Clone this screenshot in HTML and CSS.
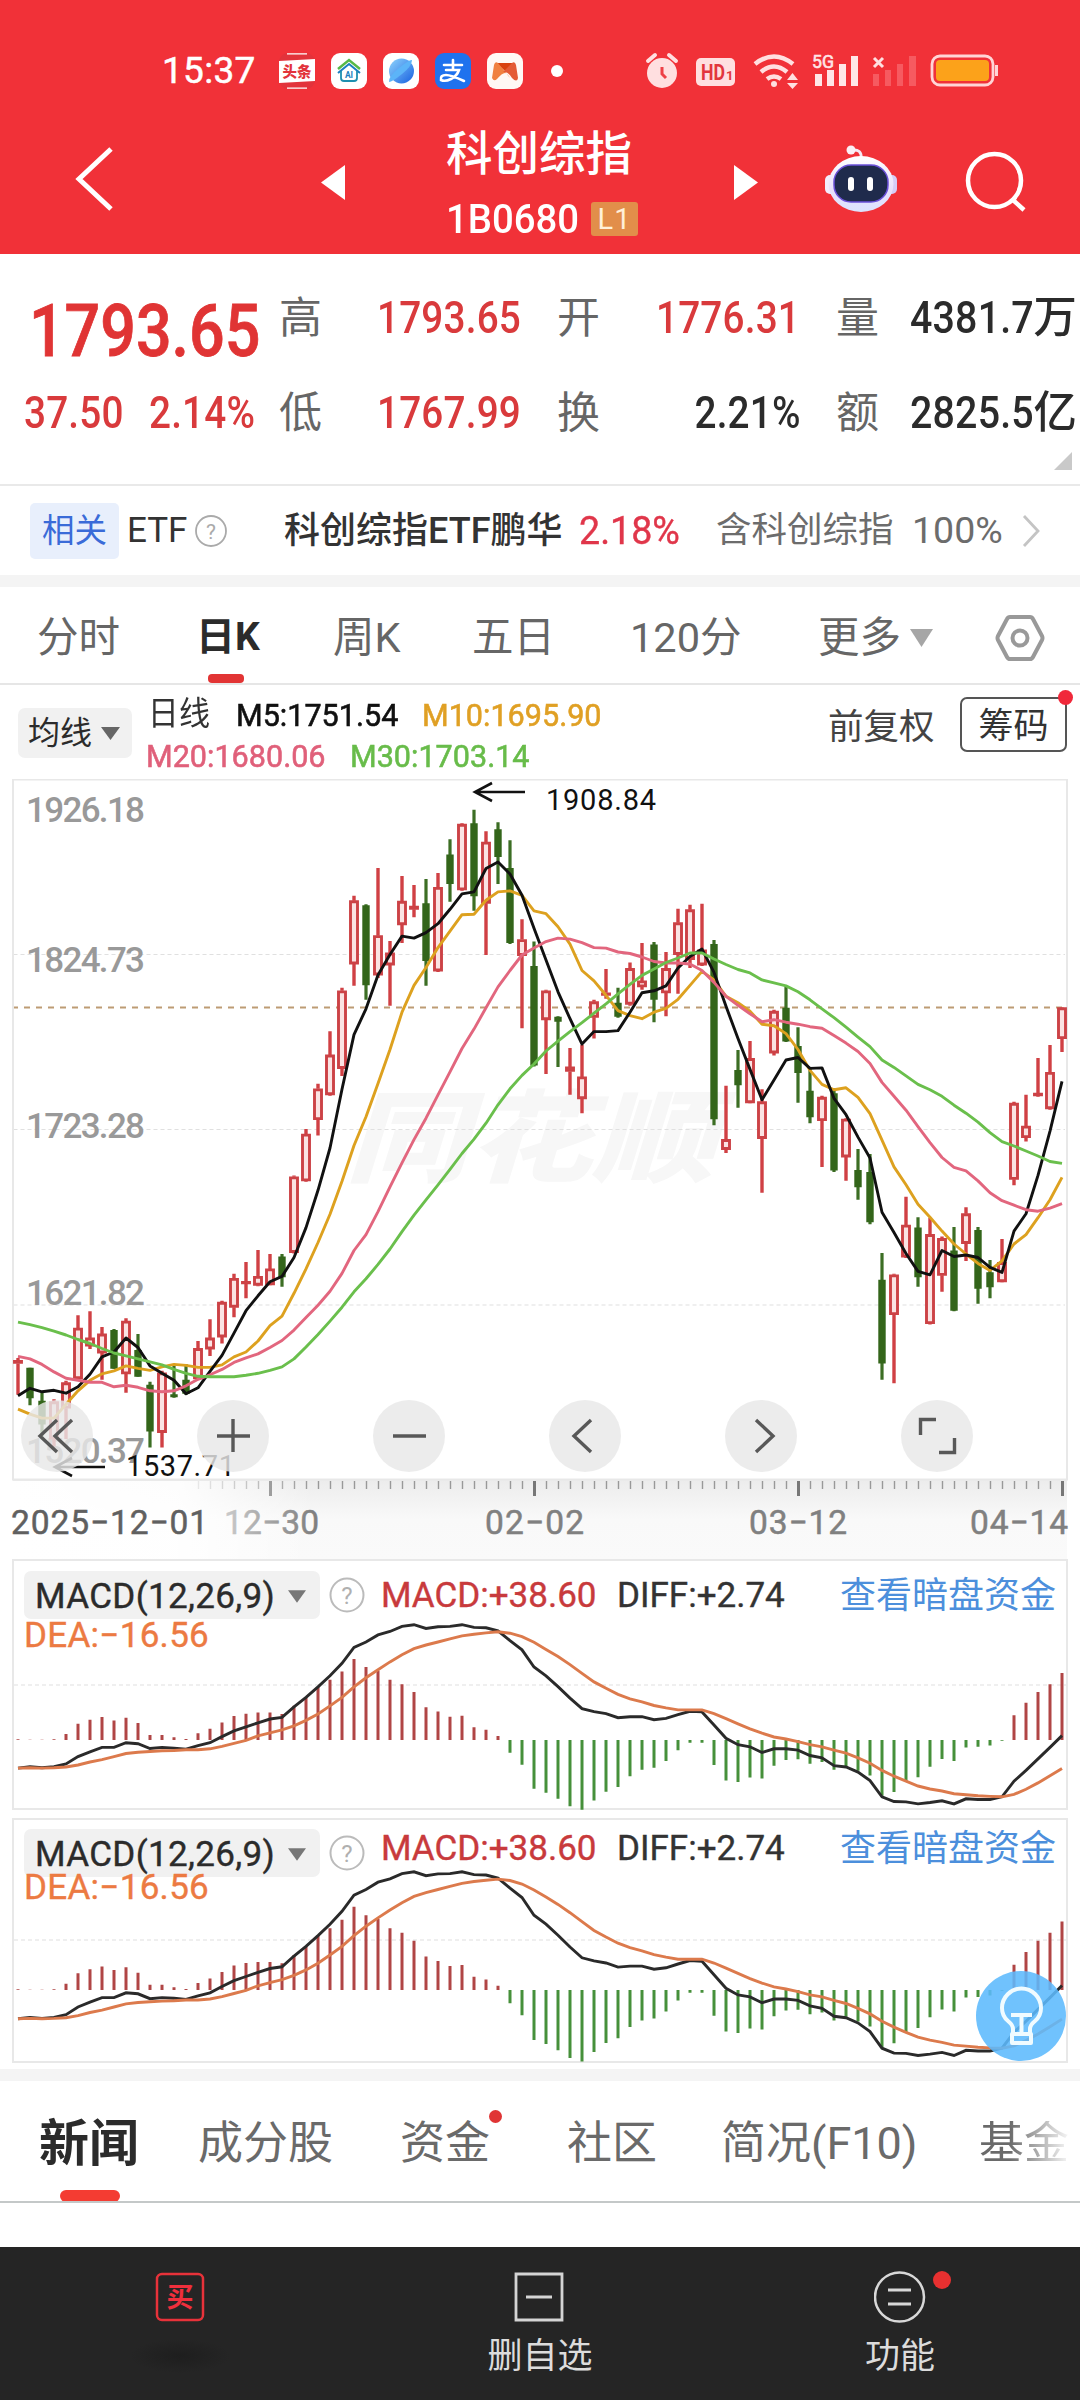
FILE: index.html
```html
<!DOCTYPE html>
<html lang="zh-CN">
<head>
<meta charset="utf-8">
<title>科创综指 1B0680</title>
<link rel="stylesheet" href="styles.css">
</head>
<body>
<header class="top">
  <div class="status">
    <span class="clock">15:37</span>
    <div class="apps">
      <svg width="36" height="36" viewBox="0 0 36 36"><rect width="36" height="36" rx="9" fill="#e2333b"/><path d="M8 .8h20M8 35.2h20" stroke="#fff" stroke-width="1.2"/><path d="M0 8l36-2v22L0 30z" fill="#fff"/><text x="18" y="23.500" font-size="14.500" font-weight="900" text-anchor="middle" fill="#e2333b">头条</text></svg>
      <svg width="36" height="36" viewBox="0 0 36 36"><rect width="36" height="36" rx="9" fill="#fff"/><path d="M7 16L18 7l11 9" fill="none" stroke="#57b947" stroke-width="2.500"/><path d="M7 20L18 11l11 9" fill="none" stroke="#1c7fc0" stroke-width="2"/><path d="M10 18v7q0 3 3 3h10q3 0 3-3v-7" fill="none" stroke="#1d8fb0" stroke-width="1.800"/><text x="18" y="24.500" font-size="8.500" font-weight="700" text-anchor="middle" fill="#1c7fc0">AI</text></svg>
      <svg width="36" height="36" viewBox="0 0 36 36"><defs><linearGradient id="globe" x1="0" y1="0" x2="1" y2="1"><stop offset="0" stop-color="#8fd4fd"/><stop offset="1" stop-color="#1760e0"/></linearGradient></defs><rect width="36" height="36" rx="9" fill="#fff"/><circle cx="18.500" cy="18" r="12.500" fill="url(#globe)"/><path d="M6 29Q5 24 16 15T29 7Q29 13 19 21T6 29z" fill="#5cb4f8"/></svg>
      <svg width="36" height="36" viewBox="0 0 36 36"><rect width="36" height="36" rx="9" fill="#1f72ee"/><path d="M9 12h18M18 7v9M11 17h13q-2 6-8 9t-10 1q-1-5 5-5 5 0 18 6" fill="none" stroke="#fff" stroke-width="2.600" stroke-linecap="round"/></svg>
      <svg width="36" height="36" viewBox="0 0 36 36"><rect width="36" height="36" rx="9" fill="#fff8f5"/><path d="M9 10h18l-9 8z" fill="#d9400f"/><path d="M5 25L7 12q1-4 4-2l12 15q-3-5-5-5-3 0-8 6-3 3-5-1z" fill="#f08040"/><path d="M31 25l-2-13q-1-4-4-2l-9 9q5-1 9 6 5 5 6 0z" fill="#e45a35"/></svg>
      <i class="dot-more"></i>
    </div>
    <div class="sys">
      <svg width="50" height="60" viewBox="640 40 50 60"><circle cx="662" cy="73" r="15" fill="#ffdfe0"/><path d="M648 61l7-6M676 61l-7-6" stroke="#ffdfe0" stroke-width="4" stroke-linecap="round"/><path d="M662 67v7l4 4" fill="none" stroke="#ee4047" stroke-width="3"/></svg>
      <svg width="55" height="60" viewBox="690 40 55 60"><rect x="696" y="58" width="39" height="28" rx="5" fill="#ffdfe0"/><text x="701" y="80" font-size="22" font-weight="700" fill="#e2363d" textLength="24" lengthAdjust="spacingAndGlyphs">HD</text><text x="726" y="80" font-size="13" font-weight="700" fill="#e2363d">1</text></svg>
      <svg width="60" height="60" viewBox="745 40 60 60" fill="none" stroke="#ffdfe0" stroke-width="4.500"><path d="M755 64q19-15 38 0M761 72q13-11 26 0M767 79q7-5 14 0"/><circle cx="774" cy="84" r="3" fill="#ffdfe0" stroke="none"/><path d="M787 80l5.500-7 5.500 7zM787 83l5.500 6 5.500-6z" fill="#ffdfe0" stroke="none"/></svg>
      <svg width="60" height="60" viewBox="805 40 60 60" fill="#ffe6e7"><path d="M815 74h7v12h-7zM827 70h7v16h-7zM839 64h7v22h-7zM851 56h7v30h-7z"/><text x="812" y="68" font-size="19" textLength="22" lengthAdjust="spacingAndGlyphs" stroke="#ffe6e7" stroke-width=".6">5G</text></svg>
      <svg width="57" height="60" viewBox="865 40 57 60"><path d="M873 74h6v12h-6zM885 70h6v16h-6zM897 64h6v22h-6zM909 56h7v30h-7z" fill="#f65a60"/><path d="M874 58l9 9M883 58l-9 9" stroke="#ffdfe0" stroke-width="3"/></svg>
      <svg width="78" height="60" viewBox="922 40 78 60"><rect x="932" y="56" width="61" height="29" rx="8" fill="none" stroke="#ffd5d6" stroke-width="2.800"/><rect x="936" y="60" width="53" height="21" rx="4" fill="#fca21a"/><path d="M996.500 65v11" stroke="#ffd5d6" stroke-width="3"/></svg>
    </div>
  </div>
  <nav class="nav">
    <svg width="200" height="154" viewBox="0 100 200 154"><path d="M111 149L79 179l32 30" fill="none" stroke="#fff" stroke-width="5"/></svg>
    <svg width="200" height="154" viewBox="200 100 200 154"><path d="M345 165v35l-24-17.500z" fill="#fff"/></svg>
    <div class="title">
      <h1>科创综指</h1>
      <div class="code"><span>1B0680</span><b>L1</b></div>
    </div>
    <svg width="120" height="154" viewBox="680 100 120 154"><path d="M734 165v35l24-17.500z" fill="#fff"/></svg>
    <svg width="130" height="154" viewBox="800 100 130 154">
      <defs><linearGradient id="shell" x1="0" y1="0" x2="0" y2="1"><stop offset="0" stop-color="#fff"/><stop offset=".6" stop-color="#e9e1fb"/><stop offset="1" stop-color="#dbe3ff"/></linearGradient></defs>
      <path d="M861 158q1-9-9-8" fill="none" stroke="#f6e8f4" stroke-width="3"/><circle cx="851" cy="150" r="4.500" fill="#fbeff5"/>
      <rect x="825" y="175" width="12" height="19" rx="5" fill="#f3edfc"/><rect x="885" y="175" width="12" height="19" rx="5" fill="#d6cdf7"/>
      <ellipse cx="861" cy="184" rx="32.500" ry="28" fill="url(#shell)"/>
      <rect x="834" y="165" width="54" height="37" rx="17" fill="#1f2b4c" stroke="#6a50d8" stroke-width="1.500"/>
      <rect x="848" y="177" width="6" height="14" rx="3" fill="#fff"/><rect x="867" y="177" width="6" height="14" rx="3" fill="#fff"/>
    </svg>
    <svg width="150" height="154" viewBox="930 100 150 154"><circle cx="994.500" cy="180.500" r="26.500" fill="none" stroke="#fff" stroke-width="4.500"/><path d="M1013 200l11 10" stroke="#fff" stroke-width="4.500"/></svg>
  </nav>
</header>

<section class="quote">
  <div class="q-row first">
    <strong class="price">1793.65</strong>
    <span>高</span><b class="up">1793.65</b>
    <span>开</span><b class="up">1776.31</b>
    <span>量</span><b class="big">4381.7<em>万</em></b>
  </div>
  <div class="q-row">
    <div class="change"><b class="up">37.50</b><b class="up">2.14%</b></div>
    <span>低</span><b class="up">1767.99</b>
    <span>换</span><b class="end">2.21%</b>
    <span>额</span><b class="big">2825.5<em>亿</em></b>
  </div>
  <i class="corner"></i>
</section>

<section class="related">
  <span class="tag">相关</span><span class="etf">ETF</span>
  <svg width="34" height="34" viewBox="0 0 34 34"><circle cx="17" cy="17" r="15" fill="none" stroke="#aaa" stroke-width="1.800"/><text x="17" y="24.500" font-size="21" text-anchor="middle" fill="#aaa">?</text></svg>
  <span class="fund">科创综指ETF鹏华</span><span class="pct">2.18%</span><span class="has">含科创综指</span><span class="full">100%</span>
  <svg width="20" height="34" viewBox="0 0 20 34"><path d="M2 2l14 15L2 32" fill="none" stroke="#c4c4c4" stroke-width="2.800"/></svg>
</section>

<nav class="periods">
  <span>分时</span><span class="on">日K</span><span>周K</span><span>五日</span><span>120分</span><span>更多</span>
  <svg width="24" height="20" viewBox="0 0 24 20"><path d="M0 1h23L11.500 19z" fill="#a6a6a6"/></svg>
  <svg width="52" height="50" viewBox="0 0 52 50"><path d="M15 4h20q2 0 3 2l9 17q1 2 0 4l-9 17q-1 2-3 2H15q-2 0-3-2L3 27q-1-2 0-4l9-17q1-2 3-2z" fill="none" stroke="#999" stroke-width="4"/><circle cx="25" cy="25" r="7.500" fill="none" stroke="#999" stroke-width="4"/></svg>
</nav>

<section class="ma-bar">
  <span class="picker">均线<svg width="19" height="14" viewBox="0 0 19 14"><path d="M0 1h19L9.500 14z" fill="#666"/></svg></span>
  <div class="ma-list">
    <div><span class="name">日线</span><span class="m5">M5:1751.54</span><span class="m10">M10:1695.90</span></div>
    <div><span class="m20">M20:1680.06</span><span class="m30">M30:1703.14</span></div>
  </div>
  <span class="adjust">前复权</span>
  <span class="chips">筹码<i></i></span>
</section>

<section class="kline">
  <svg id="kline" width="1080" height="781" viewBox="0 779 1080 781">
    <defs>
      <linearGradient id="axisBg" x1="0" y1="0" x2="0" y2="1"><stop offset="0" stop-color="#ececec"/><stop offset=".5" stop-color="#f9f9f9"/><stop offset="1" stop-color="#fafafa"/></linearGradient>
      <linearGradient id="fade" x1="0" y1="0" x2="1" y2="0"><stop offset="0" stop-color="#fff"/><stop offset=".55" stop-color="#fff" stop-opacity=".9"/><stop offset="1" stop-color="#fff" stop-opacity="0"/></linearGradient>
    </defs>
    <text class="watermark" x="345" y="1174" textLength="370" lengthAdjust="spacingAndGlyphs">同花顺</text>
    <path d="M13.500 954.500H1065M13.500 1129.500H1065M13.500 1305H1065" class="grid"/>
    <path d="M12 1007.500H1066" stroke="#bd9c74" stroke-width="1.800" stroke-dasharray="6 6"/>
    <rect x="13" y="1480" width="1054" height="79" fill="url(#axisBg)"/>
    <rect x="13" y="779.500" width="1054" height="700" class="frame"/>
    <g class="ylabel">
      <text x="26" y="822" textLength="119">1926.18</text>
      <text x="26" y="972" textLength="119">1824.73</text>
      <text x="26" y="1138" textLength="119">1723.28</text>
      <text x="26" y="1304.500" textLength="119">1621.82</text>
      <text x="26" y="1462.500" textLength="119">1520.37</text>
    </g>
    <g id="candles"></g>
    <g class="mark">
      <path d="M525 792H475M492 783l-17 9 17 9"/>
      <path d="M105 1467H55M72 1458l-17 9 17 9"/>
      <text x="546" y="809.500" textLength="110">1908.84</text>
      <text x="126" y="1476" textLength="109">1537.71</text>
    </g>
    <g id="ticks"></g>
    <text class="xlabel" x="224" y="1533.500" textLength="95">12−30</text>
    <rect x="13" y="1481" width="300" height="78" fill="url(#fade)"/>
    <text class="xlabel strong" x="11" y="1533.500" textLength="197">2025−12−01</text>
    <text class="xlabel" x="485" y="1533.500" textLength="99">02−02</text>
    <text class="xlabel" x="749" y="1533.500" textLength="98">03−12</text>
    <text class="xlabel" x="970" y="1533.500" textLength="98">04−14</text>
  </svg>
  <div class="tools">
    <button><svg width="72" height="72"><path d="M36 20L19 36l17 16M51 20L34 36l17 16"/></svg></button>
    <button><svg width="72" height="72"><path d="M20 36h33M36 19v33"/></svg></button>
    <button><svg width="72" height="72"><path d="M20 36h33"/></svg></button>
    <button><svg width="72" height="72"><path d="M42 20L25 36l17 16"/></svg></button>
    <button><svg width="72" height="72"><path d="M31 20l17 16-17 16"/></svg></button>
    <button><svg width="72" height="72"><path d="M35 19.500H19.500V35M38 52.500h15.500V38"/></svg></button>
  </div>
</section>

<section class="macd">
  <svg class="plot" id="macd1" width="1080" height="251" viewBox="0 1559 1080 251"></svg>
  <div class="line">
    <span class="picker">MACD(12,26,9)<svg width="18" height="14" viewBox="0 0 19 14"><path d="M0 1h19L9.500 14z" fill="#777"/></svg></span>
    <svg class="help" width="36" height="36" viewBox="0 0 36 36"><circle cx="18" cy="18" r="16.500" fill="none" stroke="#bbb" stroke-width="2"/><text x="18" y="26.500" font-size="24" text-anchor="middle" fill="#b0b0b0">?</text></svg>
    <span class="vals"><span class="v-macd">MACD:+38.60</span><span class="v-diff">DIFF:+2.74</span><a>查看暗盘资金</a></span>
  </div>
  <span class="v-dea">DEA:−16.56</span>
</section>
<section class="macd second">
  <svg class="plot" id="macd2" width="1080" height="245" viewBox="0 1818 1080 245"></svg>
  <div class="line">
    <span class="picker">MACD(12,26,9)<svg width="18" height="14" viewBox="0 0 19 14"><path d="M0 1h19L9.500 14z" fill="#777"/></svg></span>
    <svg class="help" width="36" height="36" viewBox="0 0 36 36"><circle cx="18" cy="18" r="16.500" fill="none" stroke="#bbb" stroke-width="2"/><text x="18" y="26.500" font-size="24" text-anchor="middle" fill="#b0b0b0">?</text></svg>
    <span class="vals"><span class="v-macd">MACD:+38.60</span><span class="v-diff">DIFF:+2.74</span><a>查看暗盘资金</a></span>
  </div>
  <span class="v-dea">DEA:−16.56</span>
  <svg class="bulb" width="90" height="90" viewBox="0 0 90 90"><circle cx="45" cy="45" r="45" fill="#5cb9fd" fill-opacity=".88"/><g fill="none" stroke="#f0fbff" stroke-width="4" stroke-linejoin="round"><path d="M37 63v-5q0-4-5-8-6-5-6-13a19.500 19.500 0 0 1 39 0q0 8-6 13-5 4-5 8v5z"/><path d="M36 63h19v9H36zM35 44h21M45.500 44v18"/></g></svg>
</section>

<nav class="info-tabs">
  <span class="on">新闻</span><span>成分股</span><span>资金<i></i></span><span>社区</span><span>简况(F10)</span><span>基金</span>
</nav>
<div class="blank"></div>
<footer class="actions">
  <div><svg width="52" height="52" viewBox="0 0 52 52"><rect x="3" y="3" width="46" height="46" rx="5" fill="none" stroke="#e8323a" stroke-width="2.500"/><text x="26" y="36" font-size="27" font-weight="700" text-anchor="middle" fill="#f02f3c">买</text></svg><i class="smudge"></i></div>
  <div><svg width="52" height="52" viewBox="0 0 52 52"><path d="M2 3h46v46H2zM12 26h26" fill="none" stroke="#d4d4d4" stroke-width="2.800"/></svg><span>删自选</span></div>
  <div><svg width="52" height="52" viewBox="0 0 52 52"><circle cx="25.500" cy="26" r="24.500" fill="none" stroke="#d8d8d8" stroke-width="2.500"/><path d="M14 19h23M14 33h23" stroke="#d8d8d8" stroke-width="3"/></svg><span>功能</span><i class="badge"></i></div>
</footer>
<script src="script.js"></script>
</body>
</html>
```
FILE: styles.css
```css
* { box-sizing: border-box; }
body { margin: 0; width: 1080px; height: 2400px; overflow: hidden; background: #fff; color: #333; font-family: Roboto, "Noto Sans CJK SC", sans-serif; line-height: 1; }
svg { display: block; flex: none; }
svg text { font-family: Roboto, "Noto Sans CJK SC", sans-serif; }
i, em { font-style: normal; }
span, b, strong, a { white-space: nowrap; }

/* header */
.top { height: 254px; background: #f13138; color: #fff; }
.status { display: flex; height: 100px; padding: 40px 80px 0 162px; }
.clock { width: 117px; font-size: 37px; line-height: 62px; letter-spacing: .3px; -webkit-text-stroke: .5px; }
.apps { display: flex; align-items: center; gap: 16px; height: 62px; width: 361px; }
.dot-more { width: 12px; height: 12px; margin-left: 12px; border-radius: 50%; background: #fff; }
.sys { display: flex; }
.nav { display: grid; grid-template-columns: 200px 200px 280px 120px 130px 150px; height: 154px; }
.title { padding: 30px 0 0 46px; }
h1 { margin: 0; font-size: 46.500px; font-weight: 500; line-height: 48px; }
.code { display: flex; align-items: center; margin-top: 21px; }
.code span { width: 145px; padding-top: 1px; font-size: 41px; line-height: 38px; font-weight: 500; transform: scaleX(.935); transform-origin: left; }
.code b { width: 47px; height: 34px; background: #e28e4a; border-radius: 3px; font-size: 29px; font-weight: 400; line-height: 35px; text-align: center; letter-spacing: 1px; color: #fff0d8; }

/* quote */
.quote { position: relative; height: 232px; padding: 36px 0 0 22px; border-bottom: 2px solid #e9e9e9; }
.q-row { display: grid; grid-template-columns: 257px 98px 180px 99px 180px 74px 170px; align-items: center; height: 94px; padding-bottom: 38px; }
.q-row:not(.first) { padding-bottom: 40px; margin-top: 2px; }
.q-row > span { font-size: 43px; color: #666; }
.q-row b { font-size: 44px; font-weight: 500; color: #2b2b2b; transform: scaleX(.88); transform-origin: left; letter-spacing: .2px; }
.q-row b.big { transform: scaleX(.895); }
.q-row b em { font-size: 44px; display: inline-block; transform: scaleX(1.1); transform-origin: left; }
.q-row b.up { color: #d93a3c; }
.q-row b.end { justify-self: end; margin-right: 35px; transform-origin: right; }
.price { align-self: start; margin: 5px 0 -30px; padding-left: 8px; font-size: 73px; font-weight: 500; -webkit-text-stroke: .8px; color: #e03434; transform: scaleX(.86); transform-origin: left; }
.change { display: grid; grid-template-columns: 125px 130px; padding-left: 2px; }
.corner { position: absolute; right: 8px; bottom: 14px; border: solid transparent; border-width: 0 0 18px 18px; border-bottom-color: #c9c9c9; }

/* related */
.related { display: grid; grid-template-columns: 97px 67px 90px 295px 137px 196px 109px 20px; align-items: center; height: 101px; padding: 0 0 0 30px; border-bottom: 12px solid #f4f4f4; }
.tag { width: 89px; height: 56px; border-radius: 5px; background: #e8effc; color: #3a6bd8; font-size: 32.500px; line-height: 56px; text-align: center; }
.etf { font-size: 35px; }
.fund { font-size: 36px; font-weight: 500; }
.pct { font-size: 38px; color: #e0364a; -webkit-text-stroke: .4px; transform: scaleX(.99); transform-origin: left; }
.has { font-size: 35.500px; color: #6c6c6c; }
.full { font-size: 37.500px; color: #6c6c6c; }
.related svg:last-child { margin-left: 1px; }

/* periods */
.periods { display: grid; grid-template-columns: 159px 137px 139px 158px 188px 92px 85px 60px; align-items: center; height: 98px; padding: 5px 0 0 37px; border-bottom: 2px solid #e6e6e6; font-size: 41.500px; color: #666; }
.periods .on { position: relative; font-weight: 700; color: #2b2b2b; font-size: 39px; }
.periods .on::after { content: ""; position: absolute; left: 12px; bottom: -26px; width: 36px; height: 9px; border-radius: 4px; background: #e23434; }

/* moving averages */
.ma-bar { display: grid; grid-template-columns: 127px 683px 132px 106px; height: 94px; padding-left: 18px; }
.picker { display: flex; align-items: center; justify-content: space-between; background: #f1f1f1; border-radius: 7px; color: #2b2b2b; }
.ma-bar .picker { width: 114px; height: 50px; margin-top: 23px; padding: 0 12px 0 10px; font-size: 32px; }
.ma-list { display: grid; grid-template-rows: 41px 41px; padding-top: 9px; font-size: 32px; }
.ma-list div { display: flex; align-items: center; }
.ma-list span { transform: scaleX(.955); transform-origin: left; -webkit-text-stroke: .6px; }
.ma-list .name { width: 91px; padding-left: 3px; font-size: 32.500px; -webkit-text-stroke: 0; }
.m5 { width: 186px; color: #111; }
.m10 { color: #e0a024; }
.m20 { width: 204px; margin-left: 1px; color: #e0607a; }
.m30 { color: #68bc4a; }
.adjust { padding-top: 25px; font-size: 35.500px; color: #444; }
.chips { position: relative; width: 107px; height: 55px; margin-top: 12px; border: 2px solid #555; border-radius: 7px; font-size: 35px; line-height: 56px; text-align: center; }
.chips i { position: absolute; right: -8px; top: -9px; width: 15px; height: 15px; border-radius: 50%; background: #f0283a; }

/* candles */
.kline { position: relative; height: 780px; }
.frame { fill: none; stroke: #e8e8e8; stroke-width: 2; }
.grid { fill: none; stroke: #e0e0e0; stroke-width: 1.2; stroke-dasharray: 4 3; }
.ylabel text { font-size: 35px; font-weight: 500; fill: #999; }
.mark path { fill: none; stroke: #111; stroke-width: 2.6; }
.mark text { font-size: 29px; fill: #111; }
.xlabel { font-size: 33.5px; fill: #808080; stroke: #808080; stroke-width: .5px; }
.xlabel.strong { fill: #606060; stroke: #606060; }
.watermark { font-size: 100px; font-weight: 900; fill: #f7f7f7; font-style: italic; }
.tools { position: absolute; left: 21px; top: 621px; display: flex; gap: 104px; }
.tools button { width: 72px; height: 72px; padding: 0; border: 0; border-radius: 50%; background: rgba(232, 232, 232, .82); }
.tools path { fill: none; stroke: #585858; stroke-width: 3.4; }

/* macd */
.macd { position: relative; height: 259px; padding: 12px 0 0 24px; }
.macd.second { height: 251px; padding-top: 11px; }
.plot { position: absolute; left: 0; top: 0; }
.line { position: relative; display: flex; align-items: center; height: 48px; font-size: 35px; -webkit-text-stroke: .4px; }
.line .picker { width: 296px; height: 48px; padding: 2px 14px 0 11px; letter-spacing: .35px; }
.help { margin-left: 9px; }
.vals { display: grid; grid-template-columns: 236px 223px 216px; margin: 2px 0 0 16px; }
.second .vals { margin-top: -8px; }
.v-macd { color: #c83a3c; }
.v-diff { color: #333; }
.vals a { font-size: 36px; color: #4c8fdc; -webkit-text-stroke: 0; }
.v-dea { position: relative; display: block; margin-top: 1px; font-size: 35px; color: #ec7a42; line-height: 32px; letter-spacing: .3px; -webkit-text-stroke: .4px; }
.second .v-dea { margin-top: -5px; }
.bulb { position: absolute; left: 976px; top: 153px; }

/* info tabs */
.info-tabs { display: grid; grid-template-columns: 159px 202px 167px 154px 258px 120px; align-items: center; height: 134px; padding-left: 39px; border-top: 12px solid #f4f4f4; border-bottom: 2px solid #c4c8c8; font-size: 45px; color: #6a6a6a; overflow: hidden; }
.info-tabs span { position: relative; top: 2px; }
.info-tabs span:last-child { color: transparent; background: linear-gradient(90deg, #6a6a6a 25%, #fff 78%); -webkit-background-clip: text; background-clip: text; }
.info-tabs .on { top: 3px; font-size: 50px; font-weight: 700; color: #2b2b2b; }
.info-tabs .on::after { content: ""; position: absolute; left: 21px; bottom: -33px; width: 60px; height: 12px; border-radius: 6px; background: #f43c32; }
.info-tabs i { position: absolute; left: 89px; top: -11px; width: 13px; height: 13px; border-radius: 50%; background: #e03434; }
.blank { height: 44px; }

/* bottom actions */
.actions { display: grid; grid-template-columns: repeat(3, 360px); height: 153px; background: #252525; color: #dcdcdc; font-size: 35px; }
.actions div { position: relative; display: flex; flex-direction: column; align-items: center; padding-top: 24px; gap: 16px; }
.smudge { width: 100px; height: 34px; border-radius: 50%; background: radial-gradient(closest-side, #1e1e1e, #252525); }
.badge { position: absolute; left: 213px; top: 24px; width: 18px; height: 18px; border-radius: 50%; background: #e83030; }
```
FILE: script.js
```js
const STEP = 12, FIRST = 18;
const x = i => FIRST + i * STEP;
const ns = 'http://www.w3.org/2000/svg';
function add(parent, name, attrs) {
  const el = document.createElementNS(ns, name);
  for (const k in attrs) el.setAttribute(k, attrs[k]);
  parent.appendChild(el);
}
const line = (vals, y) => 'M' + vals.map((v, i) => x(i) + ' ' + y(v).toFixed(1)).join('L');

// one row per day: direction, high, body top, body bottom, low (in units below the chart's top)
const days = `r 1182 1187 1193 1256|g 1202 1202 1263 1277|g 1252 1268 1316 1340|r 1265 1270 1345 1360|r 1228 1232 1283 1345|r 1096 1122 1224 1226|r 1088 1142 1158 1164|r 1120 1134 1172 1226|g 1124 1126 1204 1204|r 1102 1108 1214 1252|g 1134 1166 1220 1220|g 1230 1236 1330 1362|r 1208 1212 1332 1362|g 1196 1255 1261 1262|g 1194 1226 1254 1256|r 1148 1163 1224 1226|r 1104 1142 1164 1178|r 1067 1070 1140 1153|r 1013 1022 1080 1100|r 989 1028 1032 1062|r 965 1018 1036 1038|r 973 1003 1035 1036|g 973 978 1020 1039|r 815 818 970 972|r 722 732 826 828|r 631 641 703 735|r 525 573 653 655|r 438 444 600 615|r 253 263 390 434|g 270 272 433 462|r 197 333 412 418|r 344 368 392 474|r 213 264 311 348|r 231 274 280 296|g 219 268 384 434|r 207 236 404 406|g 139 170 229 265|r 107 109 241 243|g 80 107 254 283|r 123 145 268 372|g 105 119 175 229|g 141 197 348 350|r 300 341 373 519|g 345 394 594 596|r 442 444 502 611|g 495 496 506 597|r 559 597 606 653|r 553 617 661 690|r 462 466 497 540|r 400 448 452 460|g 438 468 496 498|r 387 399 471 474|r 348 424 436 442|g 346 351 462 507|r 366 399 448 495|r 279 307 371 450|r 271 281 381 398|r 269 362 392 394|g 342 350 702 714|r 635 743 763 770|g 563 603 634 679|r 545 580 669 670|r 642 667 741 850|r 482 485 569 574|g 436 478 546 547|g 517 555 609 669|g 600 645 698 710|r 655 658 705 798|g 640 650 805 808|r 700 702 778 826|g 762 804 839 864|g 772 808 909 913|g 971 1025 1193 1226|r 1013 1015 1095 1233|r 858 915 979 981|g 899 920 1020 1039|r 900 934 1113 1115|r 938 942 1016 1049|g 919 966 1087 1088|r 879 892 952 987|g 919 925 1043 1073|g 985 1010 1040 1062|r 943 990 1029 1030|r 667 670 823 835|r 653 716 739 747|r 579 650 655 657|r 553 608 681 683|r 477 478 540 567`.split('|').map(s => s.split(' '));
const m5 = [1258,1243,1250,1247,1253,1240,1215,1180,1170,1142,1161,1198,1213,1227,1254,1242,1209,1177,1132,1087,1057,1029,1018,980,920,845,760,642,532,480,412,371,334,338,327,309,280,249,245,198,185,209,252,318,382,446,500,551,526,526,524,487,448,444,434,398,375,360,407,475,540,602,663,623,583,578,600,599,660,693,738,780,889,930,972,1008,1015,966,978,975,980,1000,1010,927,892,815,726,626];
const m10 = [1285,1295,1303,1303,1275,1248,1227,1214,1208,1198,1203,1207,1200,1195,1197,1201,1201,1196,1180,1170,1148,1117,1098,1052,1003,950,893,827,755,697,630,562,487,433,397,357,324,291,290,262,245,243,252,283,289,315,350,403,424,453,484,494,500,487,479,461,433,405,422,455,468,485,511,514,530,562,604,632,643,639,658,691,744,798,834,873,899,927,953,973,992,1006,987,953,934,900,864,819];
const m20 = [1179,1184,1195,1210,1223,1227,1231,1231,1240,1237,1241,1248,1250,1248,1238,1225,1216,1205,1191,1182,1174,1161,1147,1126,1101,1076,1048,1012,966,934,888,838,790,743,700,653,607,560,521,478,436,403,372,358,345,338,340,347,357,358,366,369,376,385,388,388,390,403,427,455,473,490,506,502,507,511,516,519,534,549,566,590,628,656,684,717,749,779,799,806,826,850,866,875,884,887,881,872];
const m30 = [1110,1115,1121,1128,1136,1145,1153,1163,1172,1178,1184,1190,1196,1205,1213,1219,1220,1220,1220,1217,1213,1207,1200,1184,1160,1135,1108,1080,1049,1023,994,963,928,895,864,834,803,771,742,710,673,641,614,591,565,545,526,508,489,470,450,431,413,400,387,378,368,368,380,391,401,408,422,428,434,446,462,480,498,517,537,556,583,598,615,632,643,656,674,690,708,729,747,756,766,776,787,791];
const py = v => 770 + v * 0.4974;

const g = document.getElementById('candles');
let wr = '', wg = '', bg = '', br = '';
days.forEach(([c, ...v], i) => {
  const [h, t, b, l] = v.map(n => py(+n));
  if (c === 'r') {
    wr += `M${x(i)} ${h}V${t}M${x(i)} ${b}V${l}`;
    br += `M${x(i) - 3.5} ${t + 1}h7V${Math.max(b - 1, t + 1.5)}h-7z`;
  } else {
    wg += `M${x(i)} ${h}V${l}`;
    bg += `M${x(i) - 3.7} ${t}h7.400V${b}h-7.400z`;
  }
});
add(g, 'path', { d: br, fill: '#fbe3e3', stroke: '#cc4246', 'stroke-width': 2.9 });
add(g, 'path', { d: wr, stroke: '#d04044', 'stroke-width': 3.4 });
add(g, 'path', { d: wg, stroke: '#3c6e24', 'stroke-width': 3.2 });
add(g, 'path', { d: bg, fill: '#33651a' });
[[m10, '#dda11f'], [m5, '#111'], [m20, '#e2667e'], [m30, '#6abf4c']].forEach(([s, c]) =>
  add(g, 'path', { d: line(s, py), fill: 'none', stroke: c, 'stroke-width': 2.9, 'stroke-linejoin': 'round' }));

const ticks = document.getElementById('ticks');
let small = '';
for (let i = 15; i < 88; i++) small += `M${x(i) + .5} 1481v8`;
add(ticks, 'path', { d: small, stroke: '#999', 'stroke-width': 1.4 });
add(ticks, 'path', { d: 'M270.500 1481v15M534.500 1481v15M798.500 1481v15M1062.500 1481v15', stroke: '#777', 'stroke-width': 3 });

// MACD values, 592 is the zero line
const hist = [590,591,591,590,574,544,532,524,534,526,542,577,577,584,589,572,559,540,521,514,511,511,515,491,467,435,414,389,352,376,387,414,427,450,495,508,523,520,554,562,580,630,665,736,748,766,788,798,771,745,731,699,680,674,654,622,600,600,666,712,716,703,706,668,651,649,662,657,680,669,683,697,757,746,713,702,671,648,654,614,612,608,594,519,482,450,427,394];
const diff = [675,671,674,671,663,641,627,614,614,600,603,617,614,616,619,609,600,582,565,553,541,530,525,494,466,435,402,365,318,302,281,271,256,251,262,257,256,251,259,260,269,298,325,376,402,434,468,499,508,514,526,523,523,532,528,517,507,509,548,587,606,612,629,618,618,622,638,645,668,672,687,712,760,774,775,781,777,772,781,766,768,768,760,714,682,648,614,579];
const dea = [675,674,675,674,672,666,657,650,641,632,628,626,624,623,621,621,618,611,602,593,580,571,562,550,534,515,491,466,435,408,384,361,340,322,311,302,293,284,279,275,272,276,286,303,324,345,369,395,420,439,457,470,479,490,497,503,503,503,514,529,544,559,572,583,589,597,606,612,622,631,645,661,682,699,714,728,737,743,751,754,757,759,760,753,738,719,698,676];
function macd(id, top, bottom, grid, zero, k) {
  const s = document.getElementById(id);
  const y = v => zero + (v - 592) * k;
  add(s, 'rect', { x: 13, y: top, width: 1054, height: bottom - top, class: 'frame' });
  add(s, 'path', { d: `M14 ${grid}H1066`, class: 'grid' });
  let up = '', dn = '';
  hist.forEach((v, i) => {
    if (v < 592) up += `M${x(i)} ${zero}V${y(v)}`; else dn += `M${x(i)} ${zero}V${y(v)}`;
  });
  add(s, 'path', { d: up, stroke: '#b04545', 'stroke-width': 3 });
  add(s, 'path', { d: dn, stroke: '#46903a', 'stroke-width': 3 });
  add(s, 'path', { d: line(diff, y), fill: 'none', stroke: '#2a2a2a', 'stroke-width': 2.9 });
  add(s, 'path', { d: line(dea, y), fill: 'none', stroke: '#dc7a4c', 'stroke-width': 2.9 });
}
macd('macd1', 1560, 1809, 1685, 1740, 0.338);
macd('macd2', 1819, 2062, 1940, 1990, 0.3465);
```
